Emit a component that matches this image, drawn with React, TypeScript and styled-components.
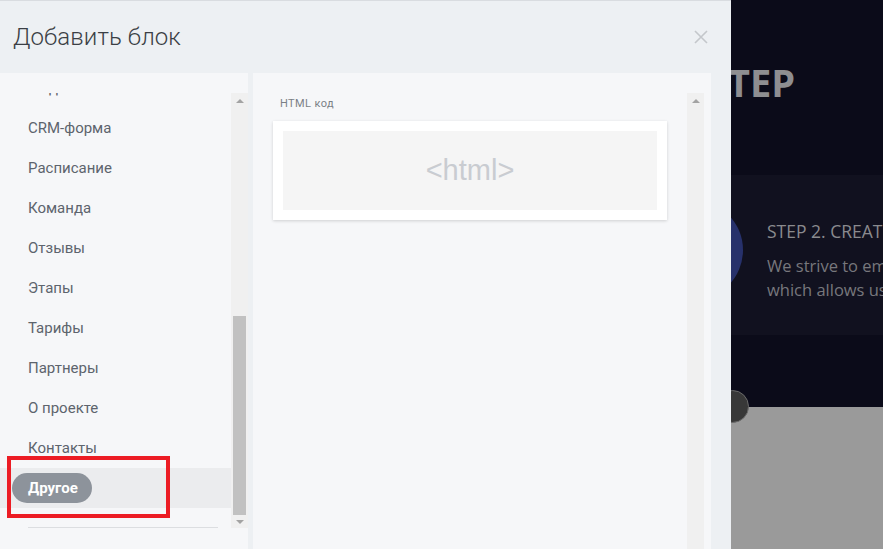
import React from "react";
import styled, { createGlobalStyle } from "styled-components";

const Global = createGlobalStyle`
  html, body { margin: 0; padding: 0; }
  body { width: 883px; height: 549px; overflow: hidden; font-family: Roboto, "Noto Sans", sans-serif; }
  #root { width: 883px; height: 549px; }
`;

const Page = styled.div`
  position: relative;
  display: flex;
  width: 883px;
  height: 549px;
  overflow: hidden;
  background: #0b0b19;
`;

const Modal = styled.div`
  position: relative;
  z-index: 2;
  width: 731px;
  flex: none;
  display: flex;
  flex-direction: column;
  background: #edf0f3;
  border-top: 1px solid #d9dce0;
  box-sizing: border-box;
`;

const Header = styled.div`
  height: 72px;
  flex: none;
  display: flex;
  align-items: center;
  justify-content: space-between;
  padding: 0 23px 0 13px;
`;

const Title = styled.h1`
  margin: 0;
  font-family: Roboto, sans-serif;
  font-weight: 300;
  font-size: 24px;
  color: #3b3f45;
  letter-spacing: 0.1px;
`;

const Close = styled.button`
  border: 0;
  background: none;
  padding: 0;
  width: 14px;
  height: 14px;
  display: flex;
  cursor: pointer;
`;

const Body = styled.div`
  flex: 1;
  min-height: 0;
  display: flex;
  gap: 5px;
  padding-right: 20px;
`;

const LeftPanel = styled.div`
  width: 248px;
  flex: none;
  background: #f6f7f9;
  padding-top: 20px;
  box-sizing: border-box;
`;

const ScrollArea = styled.div<{ $h: number }>`
  display: flex;
  height: ${(p) => p.$h}px;
`;

const Viewport = styled.div`
  flex: 1;
  overflow: hidden;
  position: relative;
`;

const List = styled.ul<{ $offset: number }>`
  list-style: none;
  margin: 0;
  padding: 0;
  transform: translateY(${(p) => -p.$offset}px);
`;

const Item = styled.li<{ $active?: boolean }>`
  height: 40px;
  display: flex;
  align-items: center;
  padding-left: ${(p) => (p.$active ? 12 : 28)}px;
  font-size: 15px;
  color: #5d646d;
  background: ${(p) => (p.$active ? "#ebecee" : "transparent")};
`;

const Pill = styled.span`
  display: inline-flex;
  align-items: center;
  height: 30px;
  padding: 0 14px 0 16px;
  border-radius: 15px;
  background: #8d939b;
  color: #fff;
  font-weight: 700;
  font-size: 15px;
`;

const Divider = styled.li`
  margin: 19px 13px 0 28px;
  height: 1px;
  background: #dcdee1;
`;

const Track = styled.div`
  width: 17px;
  flex: none;
  background: #f0f0f0;
  display: flex;
  flex-direction: column;
  align-items: center;
  box-sizing: border-box;
`;

const Arrow = styled.div<{ $down?: boolean }>`
  width: 0;
  height: 0;
  border-left: 4px solid transparent;
  border-right: 4px solid transparent;
  ${(p) =>
    p.$down
      ? "border-top: 4px solid #a3a3a3; margin: 5px 0 4px;"
      : "border-bottom: 4px solid #a3a3a3; margin: 6px 0 0;"}
`;

const ThumbSpace = styled.div`
  flex: 1;
  width: 13px;
  display: flex;
  flex-direction: column;
`;

const Thumb = styled.div<{ $top: number }>`
  margin-top: ${(p) => p.$top}px;
  flex: 1;
  background: #c1c1c1;
`;

const RightPanel = styled.div`
  flex: 1;
  background: #f6f7f9;
  padding: 20px 7px 0 0;
  display: flex;
  box-sizing: border-box;
`;

const Content = styled.div`
  flex: 1;
  padding: 0 20px;
`;

const Label = styled.div`
  font-size: 11px;
  color: #7a7f86;
  height: 20px;
  line-height: 20px;
  padding: 1px 0 0 7px;
  margin-bottom: 7px;
  letter-spacing: 0.4px;
`;

const Card = styled.div`
  background: #fff;
  padding: 10px;
  box-shadow: 0 1px 3px rgba(0, 0, 0, 0.16);
`;

const Preview = styled.div`
  height: 79px;
  background: #f5f5f5;
  display: flex;
  align-items: center;
  justify-content: center;
  font-family: "Liberation Sans", Arial, sans-serif;
  font-size: 29px;
  color: #c9ccd1;
`;

const RightTrack = styled(Track)`
  align-self: stretch;
`;

const Backdrop = styled.div`
  flex: 1;
  display: flex;
  flex-direction: column;
  font-family: "Open Sans", sans-serif;
  position: relative;
  z-index: 1;
`;

const Hero = styled.div`
  height: 175px;
  padding: 60px 0 0;
  box-sizing: border-box;
  font-weight: 700;
  font-size: 38px;
  color: #8e8e91;
  line-height: 44px;
  margin-left: -3px;
`;

const Band = styled.div`
  height: 160px;
  background: #11111f;
  padding: 44px 0 0 36px;
  box-sizing: border-box;
  position: relative;
`;

const StepTitle = styled.div`
  font-size: 17.5px;
  color: #8a8a8e;
  white-space: nowrap;
  margin-bottom: 11px;
`;

const StepText = styled.div`
  font-size: 16.5px;
  color: #77777c;
  line-height: 24px;
  white-space: nowrap;
`;

const Gap = styled.div`
  height: 72px;
`;

const Grey = styled.div`
  flex: 1;
  background: #9a9a9a;
`;

const BlueCircle = styled.div`
  position: absolute;
  left: -88px;
  top: 25px;
  width: 100px;
  height: 100px;
  border-radius: 50%;
  background: #27316b;
`;

const DarkCircle = styled.div`
  position: absolute;
  left: -15px;
  top: 390px;
  width: 33px;
  height: 33px;
  border-radius: 50%;
  background: #383838;
  border: 1px solid #6a6a6a;
  box-sizing: border-box;
`;

const Annotation = styled.div`
  position: absolute;
  z-index: 3;
  left: 7px;
  top: 456px;
  width: 163px;
  height: 62px;
  border: 4px solid #ec1c24;
  box-sizing: border-box;
  pointer-events: none;
`;

const items = [
  "Медиа",
  "CRM-форма",
  "Расписание",
  "Команда",
  "Отзывы",
  "Этапы",
  "Тарифы",
  "Партнеры",
  "О проекте",
  "Контакты",
];

export default function App() {
  return (
    <>
      <Global />
      <Page>
        <Modal>
          <Header>
            <Title>Добавить блок</Title>
            <Close aria-label="close">
              <svg width="14" height="14" viewBox="0 0 14 14">
                <path d="M1 1L13 13M13 1L1 13" stroke="#c4c7cb" strokeWidth="1.6" />
              </svg>
            </Close>
          </Header>
          <Body>
            <LeftPanel>
              <ScrollArea $h={435}>
                <Viewport>
                  <List $offset={25}>
                    {items.map((t) => (
                      <Item key={t}>{t}</Item>
                    ))}
                    <Item $active>
                      <Pill>Другое</Pill>
                    </Item>
                    <Divider />
                  </List>
                </Viewport>
                <Track>
                  <Arrow />
                  <ThumbSpace>
                    <Thumb $top={213} />
                  </ThumbSpace>
                  <Arrow $down />
                </Track>
              </ScrollArea>
            </LeftPanel>
            <RightPanel>
              <Content>
                <Label>HTML код</Label>
                <Card>
                  <Preview>&lt;html&gt;</Preview>
                </Card>
              </Content>
              <RightTrack>
                <Arrow />
              </RightTrack>
            </RightPanel>
          </Body>
        </Modal>
        <Backdrop>
          <Hero>TEP</Hero>
          <Band>
            <BlueCircle />
            <StepTitle>STEP 2. CREATE</StepTitle>
            <StepText>We strive to embrace</StepText>
            <StepText>which allows us to</StepText>
          </Band>
          <Gap />
          <Grey />
          <DarkCircle />
        </Backdrop>
        <Annotation />
      </Page>
    </>
  );
}
